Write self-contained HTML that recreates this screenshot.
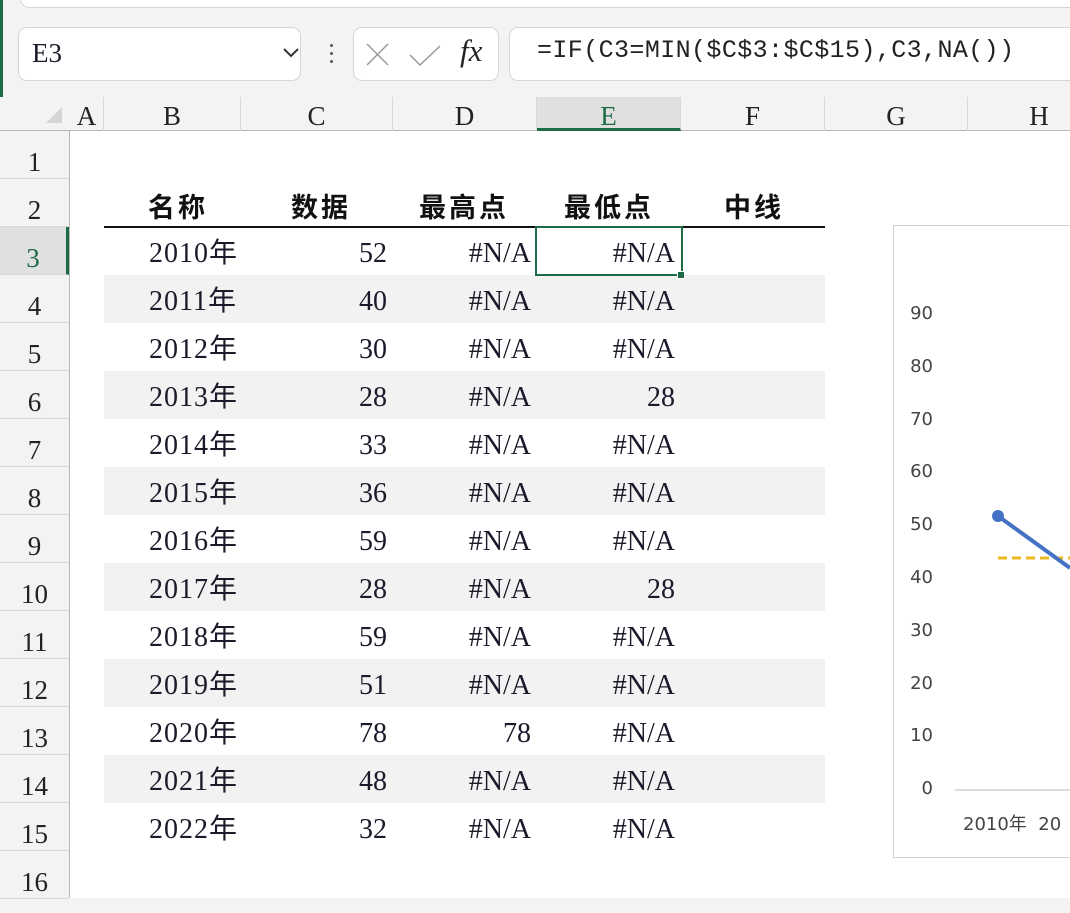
<!DOCTYPE html>
<html><head><meta charset="utf-8"><style>
*{margin:0;padding:0;box-sizing:border-box}
body{width:1070px;height:898px;overflow:hidden;background:#f3f3f3;position:relative;font-family:"Liberation Serif","Noto Serif CJK SC",serif;color:#1a1a2a}
.abs{position:absolute}
.box{position:absolute;background:#fff;border:1px solid #d6d6d6;border-radius:9px}
.ch{position:absolute;top:97px;height:34px;font-size:27px;text-align:center;line-height:38px;color:#222;border-right:1px solid #d8d8d8}
.rh{position:absolute;left:0;width:69px;height:48px;font-size:27px;text-align:center;line-height:62px;color:#222;border-bottom:1px solid #d8d8d8}
.row{position:absolute;left:104px;width:721px;height:48px;font-size:28px;line-height:54px}
.row span{position:absolute}
.g{background:#f2f2f2}
.y{left:45px;letter-spacing:1px;font-family:"Liberation Serif","Noto Sans CJK SC",serif}
.c{right:438px}.d{right:294px}.e{right:150px}
.hd{position:absolute;top:186px;font-family:"Noto Sans CJK SC",sans-serif;font-weight:bold;font-size:27px;letter-spacing:3px;color:#111}
.yl{position:absolute;width:40px;text-align:right;left:893px;font-family:"DejaVu Sans","Liberation Sans",sans-serif;font-size:18px;color:#444}
</style></head><body>
<div class="box" style="left:20px;top:-20px;width:1070px;height:28px;border-radius:0 0 9px 9px"></div>
<div class="abs" style="left:0;top:0;width:3px;height:898px;background:#1d6b44"></div>
<div class="box" style="left:18px;top:27px;width:283px;height:54px"></div>
<div class="abs" style="left:32px;top:38px;font-size:27px">E3</div>
<svg class="abs" style="left:282px;top:46px" width="20" height="14"><path d="M2 3 L9 10 L16 3" stroke="#333" stroke-width="2" fill="none"/></svg>
<div class="abs" style="left:330px;top:44px;width:3px;height:3px;background:#555;border-radius:50%"></div>
<div class="abs" style="left:330px;top:52px;width:3px;height:3px;background:#555;border-radius:50%"></div>
<div class="abs" style="left:330px;top:60px;width:3px;height:3px;background:#555;border-radius:50%"></div>
<div class="box" style="left:353px;top:27px;width:146px;height:54px"></div>
<svg class="abs" style="left:362px;top:40px" width="130" height="30"><path d="M5 4 L26 25 M26 4 L5 25" stroke="#999" stroke-width="1.5"/><path d="M48 15 L58 25 L78 6" stroke="#999" stroke-width="1.5" fill="none"/></svg>
<div class="abs" style="left:460px;top:33px;font-size:31px;font-style:italic;font-family:'Liberation Serif',serif;color:#222">fx</div>
<div class="box" style="left:509px;top:27px;width:600px;height:54px"></div>
<div class="abs" style="left:537px;top:36px;font-size:25px;letter-spacing:0.4px;font-family:'Liberation Mono',monospace;color:#222">=IF(C3=MIN($C$3:$C$15),C3,NA())</div>

<div class="abs" style="left:0;top:97px;width:1070px;height:34px;background:#f3f3f3;border-bottom:1px solid #b8b8b8"></div>
<svg class="abs" style="left:44px;top:105px" width="20" height="20"><path d="M18 2 L18 18 L2 18 Z" fill="#d5d5d5"/></svg>
<div class="ch" style="left:70px;width:34px">A</div>
<div class="ch" style="left:104px;width:137px">B</div>
<div class="ch" style="left:241px;width:152px">C</div>
<div class="ch" style="left:393px;width:144px">D</div>
<div class="ch" style="left:537px;width:144px;background:#e0e0e0;border-bottom:3px solid #1d6b44;color:#1d6b44">E</div>
<div class="ch" style="left:681px;width:144px">F</div>
<div class="ch" style="left:825px;width:143px">G</div>
<div class="ch" style="left:968px;width:143px">H</div>

<div class="abs" style="left:0;top:131px;width:70px;height:767px;background:#f3f3f3;border-right:1px solid #b8b8b8"></div>
<div class="abs" style="left:70px;top:131px;width:1000px;height:767px;background:#fff"></div>
<div class="rh" style="top:131px">1</div>
<div class="rh" style="top:179px">2</div>
<div class="rh" style="top:227px;background:#e0e0e0;color:#1d6b44;border-right:3px solid #1d6b44">3</div>
<div class="rh" style="top:275px">4</div>
<div class="rh" style="top:323px">5</div>
<div class="rh" style="top:371px">6</div>
<div class="rh" style="top:419px">7</div>
<div class="rh" style="top:467px">8</div>
<div class="rh" style="top:515px">9</div>
<div class="rh" style="top:563px">10</div>
<div class="rh" style="top:611px">11</div>
<div class="rh" style="top:659px">12</div>
<div class="rh" style="top:707px">13</div>
<div class="rh" style="top:755px">14</div>
<div class="rh" style="top:803px">15</div>
<div class="rh" style="top:851px">16</div>

<div class="hd" style="left:148px">名称</div>
<div class="hd" style="left:291px">数据</div>
<div class="hd" style="left:419px">最高点</div>
<div class="hd" style="left:564px">最低点</div>
<div class="hd" style="left:724px">中线</div>
<div class="abs" style="left:104px;top:226px;width:721px;height:2px;background:#111"></div>

<div class="row" style="top:227px"><span class="y">2010年</span><span class="c">52</span><span class="d">#N/A</span><span class="e">#N/A</span></div>
<div class="row g" style="top:275px"><span class="y">2011年</span><span class="c">40</span><span class="d">#N/A</span><span class="e">#N/A</span></div>
<div class="row" style="top:323px"><span class="y">2012年</span><span class="c">30</span><span class="d">#N/A</span><span class="e">#N/A</span></div>
<div class="row g" style="top:371px"><span class="y">2013年</span><span class="c">28</span><span class="d">#N/A</span><span class="e">28</span></div>
<div class="row" style="top:419px"><span class="y">2014年</span><span class="c">33</span><span class="d">#N/A</span><span class="e">#N/A</span></div>
<div class="row g" style="top:467px"><span class="y">2015年</span><span class="c">36</span><span class="d">#N/A</span><span class="e">#N/A</span></div>
<div class="row" style="top:515px"><span class="y">2016年</span><span class="c">59</span><span class="d">#N/A</span><span class="e">#N/A</span></div>
<div class="row g" style="top:563px"><span class="y">2017年</span><span class="c">28</span><span class="d">#N/A</span><span class="e">28</span></div>
<div class="row" style="top:611px"><span class="y">2018年</span><span class="c">59</span><span class="d">#N/A</span><span class="e">#N/A</span></div>
<div class="row g" style="top:659px"><span class="y">2019年</span><span class="c">51</span><span class="d">#N/A</span><span class="e">#N/A</span></div>
<div class="row" style="top:707px"><span class="y">2020年</span><span class="c">78</span><span class="d">78</span><span class="e">#N/A</span></div>
<div class="row g" style="top:755px"><span class="y">2021年</span><span class="c">48</span><span class="d">#N/A</span><span class="e">#N/A</span></div>
<div class="row" style="top:803px"><span class="y">2022年</span><span class="c">32</span><span class="d">#N/A</span><span class="e">#N/A</span></div>

<div class="abs" style="left:535px;top:226px;width:148px;height:50px;border:2px solid #1d6b44"></div>
<div class="abs" style="left:677px;top:271px;width:8px;height:8px;background:#1d6b44;border:1px solid #fff"></div>

<div class="abs" style="left:893px;top:225px;width:200px;height:633px;border:1px solid #d0d0d0;background:#fff"></div>
<div class="yl" style="top:303px">90</div>
<div class="yl" style="top:356px">80</div>
<div class="yl" style="top:409px">70</div>
<div class="yl" style="top:461px">60</div>
<div class="yl" style="top:514px">50</div>
<div class="yl" style="top:567px">40</div>
<div class="yl" style="top:620px">30</div>
<div class="yl" style="top:673px">20</div>
<div class="yl" style="top:725px">10</div>
<div class="yl" style="top:778px">0</div>
<svg class="abs" style="left:893px;top:225px" width="177" height="633">
<line x1="62" y1="565" x2="177" y2="565" stroke="#d0d0d0" stroke-width="1.5"/>
<line x1="105" y1="333" x2="177" y2="333" stroke="#f0b820" stroke-width="3" stroke-dasharray="9,5"/>
<line x1="105" y1="291" x2="177" y2="343" stroke="#4472c4" stroke-width="4"/>
<circle cx="105" cy="291" r="6" fill="#4472c4"/>
</svg>
<div class="abs" style="left:963px;top:810px;font-family:'DejaVu Sans','Noto Sans CJK SC',sans-serif;font-size:18px;color:#444;white-space:nowrap">2010年&nbsp; 20</div>
</body></html>
